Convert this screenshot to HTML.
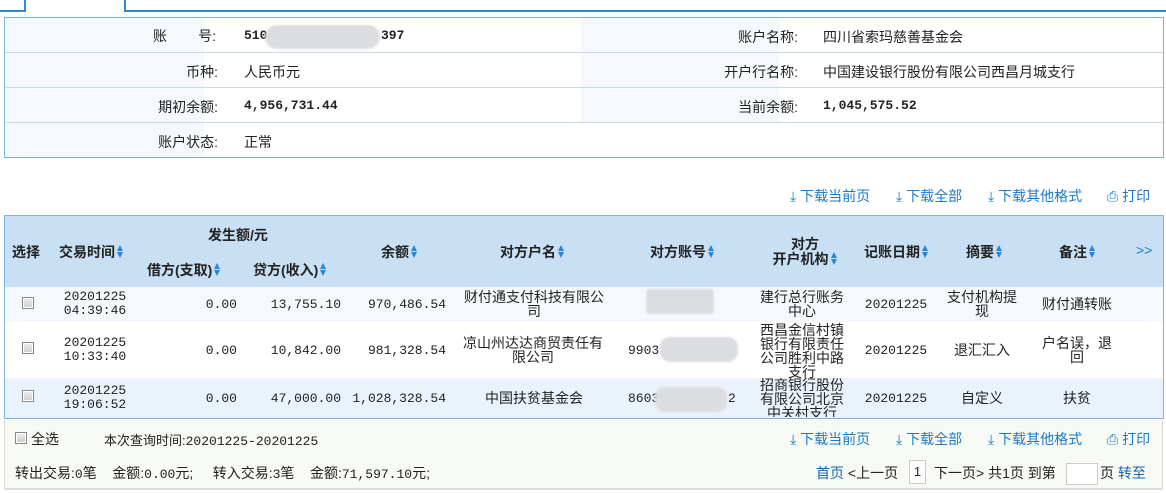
<!DOCTYPE html>
<html><head><meta charset="utf-8"><style>
*{margin:0;padding:0;box-sizing:border-box}
body{width:1166px;height:493px;background:#fff;position:relative;overflow:hidden;font-family:"Liberation Sans","Noto Sans CJK SC",sans-serif;font-size:14px;color:#222}
.a{position:absolute;white-space:nowrap}
.m{font-family:"Liberation Mono","Noto Sans CJK SC",monospace;font-size:13px}
.b{font-weight:bold}
.bl{color:#1a7bc9}
.r{text-align:right}.c{text-align:center}
.hd{font-weight:bold;font-size:14px;color:#222}
.ar{display:inline-block;width:7px;height:14px;vertical-align:-2px;margin-left:2px;position:relative}
.ar:before{content:"";position:absolute;left:0;top:0;border-left:3.5px solid transparent;border-right:3.5px solid transparent;border-bottom:6px solid #2a86d6}
.ar:after{content:"";position:absolute;left:0;top:7px;border-left:3.5px solid transparent;border-right:3.5px solid transparent;border-top:6px solid #2a86d6}
.cb{position:absolute;width:12px;height:12px;border:1px solid #888;background:linear-gradient(#eee,#ccc);box-shadow:inset 0 0 0 1px #fff}
.blur{position:absolute;background:#dcdde0;border-radius:8px;filter:blur(1px)}
.t{font-size:14px;line-height:14px}
</style></head><body>
<div class="a" style="left:0;top:10px;width:25px;height:2px;background:#2a8bd4"></div>
<div class="a" style="left:24px;top:0;width:2px;height:12px;background:#2a8bd4"></div>
<div class="a" style="left:124px;top:0;width:2px;height:12px;background:#2a8bd4"></div>
<div class="a" style="left:124px;top:10px;width:1042px;height:2px;background:#2a8bd4"></div>

<div class="a" style="left:4px;top:17px;width:1160px;height:141px;border:1px solid #7fb2e0;background:#fff">
 <div class="a" style="left:0;top:0;width:199px;height:139px;background:#f5f9fd"></div>
 <div class="a" style="left:576px;top:0;width:198px;height:104px;background:#f5f9fd"></div>
 <div class="a" style="left:0;top:34px;width:1158px;height:1px;background:#c9d9ea"></div>
 <div class="a" style="left:0;top:69px;width:1158px;height:1px;background:#c9d9ea"></div>
 <div class="a" style="left:0;top:104px;width:1158px;height:1px;background:#c9d9ea"></div>
</div>
<div class="a" style="left:153px;top:26px">账&nbsp;&nbsp;&nbsp;&nbsp;&nbsp;&nbsp;&nbsp;&nbsp;号:</div>
<div class="a m b" style="left:244px;top:28px">510</div>
<div class="blur" style="left:265px;top:25px;width:115px;height:24px;border-radius:12px"></div>
<div class="a m b" style="left:381px;top:28px">397</div>
<div class="a r" style="left:100px;top:62px;width:118px">币种:</div>
<div class="a" style="left:244px;top:62px">人民币元</div>
<div class="a r" style="left:100px;top:97px;width:118px">期初余额:</div>
<div class="a m b" style="left:244px;top:98px">4,956,731.44</div>
<div class="a r" style="left:100px;top:132px;width:118px">账户状态:</div>
<div class="a" style="left:244px;top:132px">正常</div>
<div class="a r" style="left:660px;top:27px;width:138px">账户名称:</div>
<div class="a" style="left:823px;top:27px">四川省索玛慈善基金会</div>
<div class="a r" style="left:660px;top:62px;width:138px">开户行名称:</div>
<div class="a" style="left:823px;top:62px">中国建设银行股份有限公司西昌月城支行</div>
<div class="a r" style="left:660px;top:97px;width:138px">当前余额:</div>
<div class="a m b" style="left:823px;top:98px">1,045,575.52</div>

<div class="a bl" style="left:790px;top:186px">⤓ 下载当前页</div>
<div class="a bl" style="left:896px;top:186px">⤓ 下载全部</div>
<div class="a bl" style="left:988px;top:186px">⤓ 下载其他格式</div>
<div class="a bl" style="left:1107px;top:186px">⎙ 打印</div>

<div class="a" style="left:4px;top:215px;width:1160px;height:204px;border:1px solid #7fb2e0;border-bottom:2px solid #7fb2e0">
 <div class="a" style="left:0;top:0;width:1158px;height:71px;background:#c8dff4"></div>
 <div class="a" style="left:0;top:71px;width:1158px;height:35px;background:#f5f9fd"></div>
 <div class="a" style="left:0;top:106px;width:1158px;height:56px;background:#fff"></div>
 <div class="a" style="left:0;top:162px;width:1158px;height:40px;background:#eaf3fb"></div>
</div>
<div class="a hd" style="left:12px;top:242px">选择</div>
<div class="a hd" style="left:59px;top:242px">交易时间<i class="ar"></i></div>
<div class="a hd" style="left:208px;top:225px">发生额/元</div>
<div class="a hd" style="left:147px;top:260px">借方(支取)<i class="ar"></i></div>
<div class="a hd" style="left:253px;top:260px">贷方(收入)<i class="ar"></i></div>
<div class="a hd" style="left:381px;top:242px">余额<i class="ar"></i></div>
<div class="a hd" style="left:500px;top:242px">对方户名<i class="ar"></i></div>
<div class="a hd" style="left:650px;top:242px">对方账号<i class="ar"></i></div>
<div class="a hd c" style="left:755px;top:237px;width:100px;line-height:15px">对方<br>开户机构<i class="ar"></i></div>
<div class="a hd" style="left:864px;top:242px">记账日期<i class="ar"></i></div>
<div class="a hd" style="left:966px;top:242px">摘要<i class="ar"></i></div>
<div class="a hd" style="left:1059px;top:242px">备注<i class="ar"></i></div>
<div class="a bl" style="left:1136px;top:242px;font-size:14px">&gt;&gt;</div>

<div class="cb" style="left:22px;top:297px"></div>
<div class="a m c" style="left:55px;top:290px;width:80px;line-height:14px">20201225<br>04:39:46</div>
<div class="a m r" style="left:150px;top:297px;width:87px">0.00</div>
<div class="a m r" style="left:250px;top:297px;width:91px">13,755.10</div>
<div class="a m r" style="left:350px;top:297px;width:96px">970,486.54</div>
<div class="a c t" style="left:459px;top:290px;width:150px;white-space:normal">财付通支付科技有限公司</div>
<div class="blur" style="left:646px;top:289px;width:68px;height:25px;border-radius:3px"></div>
<div class="a c t" style="left:760px;top:290px;width:84px;white-space:normal">建行总行账务中心</div>
<div class="a m c" style="left:856px;top:297px;width:80px">20201225</div>
<div class="a c t" style="left:946px;top:290px;width:72px;white-space:normal">支付机构提现</div>
<div class="a c t" style="left:1030px;top:297px;width:94px">财付通转账</div>

<div class="cb" style="left:22px;top:342px"></div>
<div class="a m c" style="left:55px;top:336px;width:80px;line-height:14px">20201225<br>10:33:40</div>
<div class="a m r" style="left:150px;top:343px;width:87px">0.00</div>
<div class="a m r" style="left:250px;top:343px;width:91px">10,842.00</div>
<div class="a m r" style="left:350px;top:343px;width:96px">981,328.54</div>
<div class="a c t" style="left:459px;top:336px;width:148px;white-space:normal">凉山州达达商贸责任有限公司</div>
<div class="a m" style="left:628px;top:343px">9903</div>
<div class="blur" style="left:660px;top:337px;width:78px;height:25px;border-radius:10px"></div>
<div class="a c t" style="left:760px;top:323px;width:84px;white-space:normal">西昌金信村镇银行有限责任公司胜利中路支行</div>
<div class="a m c" style="left:856px;top:343px;width:80px">20201225</div>
<div class="a c t" style="left:949px;top:343px;width:66px">退汇汇入</div>
<div class="a c t" style="left:1042px;top:336px;width:70px;white-space:normal">户名误，退回</div>

<div class="cb" style="left:22px;top:390px"></div>
<div class="a m c" style="left:55px;top:384px;width:80px;line-height:14px">20201225<br>19:06:52</div>
<div class="a m r" style="left:150px;top:391px;width:87px">0.00</div>
<div class="a m r" style="left:250px;top:391px;width:91px">47,000.00</div>
<div class="a m r" style="left:340px;top:391px;width:106px">1,028,328.54</div>
<div class="a c t" style="left:455px;top:391px;width:158px">中国扶贫基金会</div>
<div class="a m" style="left:628px;top:391px">8603</div>
<div class="a m" style="left:728px;top:391px">2</div>
<div class="blur" style="left:655px;top:387px;width:72px;height:25px;border-radius:10px"></div>
<div class="a c t" style="left:760px;top:378px;width:84px;height:39px;overflow:hidden;white-space:normal">招商银行股份有限公司北京中关村支行</div>
<div class="a m c" style="left:856px;top:391px;width:80px">20201225</div>
<div class="a c t" style="left:949px;top:391px;width:66px">自定义</div>
<div class="a c t" style="left:1037px;top:391px;width:80px">扶贫</div>

<div class="a" style="left:4px;top:420px;width:1159px;height:70px;background:#f7f9f4;border-left:1px solid #ddd;border-right:1px solid #ddd;border-bottom:2px solid #ddd"></div>
<div class="cb" style="left:15px;top:432px"></div>
<div class="a" style="left:31px;top:429px;font-size:14px">全选</div>
<div class="a" style="left:104px;top:430px;font-size:13px">本次查询时间:<span class="m">20201225-20201225</span></div>
<div class="a bl" style="left:790px;top:429px">⤓ 下载当前页</div>
<div class="a bl" style="left:896px;top:429px">⤓ 下载全部</div>
<div class="a bl" style="left:988px;top:429px">⤓ 下载其他格式</div>
<div class="a bl" style="left:1107px;top:429px">⎙ 打印</div>
<div class="a" style="left:15px;top:463px;font-size:14px">转出交易:<span class="m">0</span>笔&nbsp;&nbsp;&nbsp;&nbsp;金额:<span class="m">0.00</span>元;&nbsp;&nbsp;&nbsp;&nbsp;&nbsp;转入交易:<span class="m">3</span>笔&nbsp;&nbsp;&nbsp;&nbsp;金额:<span class="m">71,597.10</span>元;</div>
<div class="a" style="left:816px;top:463px;font-size:14px"><span style="color:#1565b0">首页</span> &lt;上一页</div>
<div class="a" style="left:909px;top:460px;width:17px;height:24px;border:1px solid #ccc;background:#fff;font-size:13px;text-align:center;line-height:22px">1</div>
<div class="a" style="left:934px;top:463px;font-size:14px">下一页&gt; 共1页 到第</div>
<div class="a" style="left:1066px;top:463px;width:32px;height:22px;border:1px solid #ccc;background:#fff"></div>
<div class="a" style="left:1100px;top:463px;font-size:14px">页 <span style="color:#1565b0">转至</span></div>
</body></html>
